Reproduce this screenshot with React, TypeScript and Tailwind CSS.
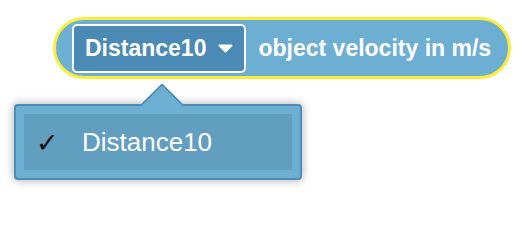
export default function App() {
  return (
    <div className="w-[520px] h-[208px] bg-white pt-[17px] pl-[14px] font-['Liberation_Sans',Arial,sans-serif]">
      <div className="ml-[39px] inline-flex h-[62px] items-center gap-[12px] rounded-full border-[3px] border-[#fbed3a] bg-[#6daed3] pl-[16px] pr-[17px]">
        <div className="flex h-[49px] items-center gap-[12px] rounded-[5px] border-2 border-white bg-[#4a8ab4] pl-[11px] pr-[11px]">
          <span className="text-[23px] font-bold leading-none text-white">Distance10</span>
          <svg width="15" height="9" viewBox="0 0 15 9">
            <path d="M1.5 1.5 H13.5 L7.5 7.5 Z" fill="white" stroke="white" strokeWidth="2" strokeLinejoin="round" />
          </svg>
        </div>
        <span className="text-[23px] font-bold leading-none text-white">object velocity in m/s</span>
      </div>

      <div className="relative mt-[25px] w-[288px] rounded-[4px] border-2 border-[#4d8cb7] bg-[#6daed3] p-2 shadow-[0_0_8px_1px_rgba(0,0,0,0.28)]">
        <div className="absolute left-[131px] top-[-17px] h-[30px] w-[30px] rotate-45 rounded-tl-[3px] border-l-2 border-t-2 border-[#4d8cb7] bg-[#6daed3]" />
        <div className="relative flex h-[56px] items-center bg-[#629ebf] pl-[12px]">
          <span className="w-[46px] font-['DejaVu_Sans',sans-serif] text-[27px] font-bold leading-none text-[#111]">✓</span>
          <span className="text-[26px] leading-none text-white">Distance10</span>
        </div>
      </div>
    </div>
  );
}
